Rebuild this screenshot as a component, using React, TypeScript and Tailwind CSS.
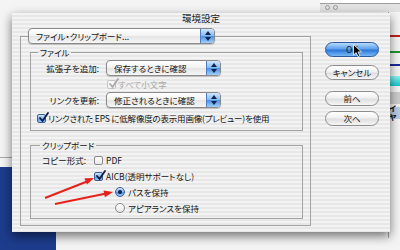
import React from "react";

const stripes =
  "bg-[repeating-linear-gradient(180deg,#f3f3f3_0px,#f3f3f3_2px,#e7e7e7_2px,#e7e7e7_4px)]";

const Stepper = () => (
  <div className="flex w-[14px] flex-col items-center justify-center gap-[2px] rounded-r-[3px] border-l border-[#4f7cc0] bg-[linear-gradient(180deg,#cfe6fd,#84bbf4_48%,#4a92e6_52%,#9fcefb)]">
    <svg width="6" height="4" viewBox="0 0 6 4">
      <path d="M0 4 L3 0 L6 4 Z" fill="#14234a" />
    </svg>
    <svg width="6" height="4" viewBox="0 0 6 4">
      <path d="M0 0 L6 0 L3 4 Z" fill="#14234a" />
    </svg>
  </div>
);

const Popup = ({ label, className }: { label: string; className: string }) => (
  <div
    className={
      "flex h-[16px] items-stretch rounded-[4px] border border-[#8a8a8a] bg-[linear-gradient(180deg,#ffffff,#f2f2f2_50%,#e4e4e4_52%,#f7f7f7)] shadow-[0_1px_1px_rgba(0,0,0,0.18)] " +
      className
    }
  >
    <div className="flex flex-1 items-center pl-[7px] leading-none">{label}</div>
    <Stepper />
  </div>
);

const Check = ({ checked, disabled }: { checked?: boolean; disabled?: boolean }) => (
  <span
    className={
      "relative inline-flex h-[9px] w-[9px] shrink-0 rounded-[2px] border " +
      (disabled
        ? "border-[#c4c4c4] bg-[#f7f7f7]"
        : checked
          ? "border-[#3f5f95] bg-[linear-gradient(180deg,#cfe5fc,#7fb5ee_50%,#4f91de_52%,#9ccbf9)]"
          : "border-[#8a8a8a] bg-[linear-gradient(180deg,#ffffff,#e9e9e9)]")
    }
  >
    {checked && (
      <svg className="absolute left-[1px] top-[-3px]" width="10" height="11" viewBox="0 0 10 11">
        <path
          d="M1 6 L3.5 9 L9 1"
          fill="none"
          stroke={disabled ? "#a9a9a9" : "#0f1d45"}
          strokeWidth="1.8"
          strokeLinecap="round"
          strokeLinejoin="round"
        />
      </svg>
    )}
  </span>
);

const Radio = ({ on }: { on?: boolean }) => (
  <span
    className={
      "inline-flex h-[10px] w-[10px] shrink-0 items-center justify-center rounded-full border " +
      (on
        ? "border-[#3f5f95] bg-[linear-gradient(180deg,#cfe5fc,#7fb5ee_50%,#4f91de_52%,#9ccbf9)]"
        : "border-[#8a8a8a] bg-[linear-gradient(180deg,#ffffff,#e6e6e6)]")
    }
  >
    {on && <span className="h-[4px] w-[4px] rounded-full bg-[#0f1d45]" />}
  </span>
);

const AquaButton = ({
  label,
  primary,
  className,
}: {
  label: string;
  primary?: boolean;
  className: string;
}) => (
  <div
    className={
      "flex h-[15px] w-[54px] items-center justify-center rounded-full border leading-none " +
      (primary
        ? "border-[#2d58a0] bg-[linear-gradient(180deg,#b9dafc,#5ea2ec_45%,#2b76d8_55%,#79b8f7)] text-[#0c1836] "
        : "border-[#8d8d8d] bg-[linear-gradient(180deg,#ffffff,#f0f0f0_48%,#dedede_52%,#f6f6f6)] ") +
      className
    }
  >
    {label}
  </div>
);

export default function App() {
  return (
    <div className="relative h-[250px] w-[400px] overflow-hidden bg-[#f4f4f4] font-['Noto_Sans_CJK_JP','Liberation_Sans',sans-serif] text-[8.5px] text-[#141414] [font-feature-settings:'palt']">
      {/* desktop windows behind */}
      <div className="absolute left-0 top-[157px] h-[1px] w-[14px] bg-[#a8a8a8]" />
      <div className="absolute left-0 top-[167px] h-[83px] w-[56px] bg-[#1d3c8c]" />
      <div className="absolute left-[320px] top-0 flex h-[12px] w-[80px] flex-col bg-[#e2e2e2]">
        <div className="h-[4px] border-b border-[#a0a0a0] bg-white" />
        <div className="flex gap-[3px] pl-[5px] pt-[1px]">
          <span className="h-[5px] w-[5px] rounded-full border border-[#9a9a9a]" />
          <span className="h-[5px] w-[5px] rounded-full border border-[#9a9a9a]" />
        </div>
      </div>
      <div className="absolute left-[388px] top-[12px] flex h-[226px] w-[12px] flex-col border-l border-[#9c9c9c] bg-[#f4f4f4]">
        <div className="mt-[23px] h-[2px] bg-[#c0201a]" />
        <div className="mt-[14px] h-[2px] bg-[#1e9a2c]" />
        <div className="mt-[11px] h-[2px] bg-[#1a2aa0]" />
        <div className="mt-[10px] h-[10px] bg-[linear-gradient(180deg,#8ff4f4,#12c8cc)]" />
        <div className="mt-[6px] h-[12px] bg-[#cdcdcd]" />
        <div className="mt-[3px] flex h-[12px] items-center bg-[#b9cbe6] text-[8px] font-bold leading-none">
          イヤ
        </div>
      </div>

      {/* dialog */}
      <div
        className={
          "absolute left-[12px] top-[13px] flex h-[219px] w-[378px] flex-col shadow-[0_4px_10px_rgba(0,0,0,0.55)] " +
          stripes
        }
      >
        <div className="flex h-[12px] items-center justify-center text-[9.5px] leading-none text-[#222]">
          環境設定
        </div>

        <div className="flex pl-[8px] pt-[3px]">
          <fieldset className="m-0 h-[198px] w-[291px] border border-[#a2a2a2] p-0">
            <legend className="ml-[7px] p-0">
              <Popup label="ファイル・クリップボード..." className="w-[187px]" />
            </legend>

            <div className="ml-[9px] mr-[7px] mt-[3px] flex flex-col">
              <fieldset className="m-0 h-[84px] border border-[#a2a2a2] p-0">
                <legend className="ml-[7px] px-[2px] leading-[11px]">ファイル</legend>

                <div className="mt-[2px] flex h-[16px] items-center">
                  <span className="ml-[6px] w-[62px] text-right leading-none">拡張子を追加:</span>
                  <Popup label="保存するときに確認" className="ml-[7px] w-[115px]" />
                </div>

                <div className="mt-[2px] flex h-[12px] items-center pl-[76px]">
                  <Check checked disabled />
                  <span className="ml-[2px] leading-none text-[#a8a8a8]">すべて小文字</span>
                </div>

                <div className="mt-[2px] flex h-[16px] items-center">
                  <span className="ml-[6px] w-[62px] text-right leading-none">リンクを更新:</span>
                  <Popup label="修正されるときに確認" className="ml-[7px] w-[115px]" />
                </div>

                <div className="mt-[3px] flex h-[14px] items-center pl-[6px]">
                  <Check checked />
                  <span className="ml-[2px] leading-none tracking-[-0.2px]">
                    リンクされた EPS に低解像度の表示用画像(プレビュー)を使用
                  </span>
                </div>
              </fieldset>

              <fieldset className="m-0 mt-[9px] h-[79px] border border-[#a2a2a2] p-0">
                <legend className="ml-[9px] px-[2px] leading-[11px]">クリップボード</legend>

                <div className="mt-[1px] flex h-[16px] items-center">
                  <span className="w-[55px] text-right leading-none">コピー形式:</span>
                  <span className="ml-[8px] flex items-center">
                    <Check />
                    <span className="ml-[3px] leading-none">PDF</span>
                  </span>
                </div>

                <div className="flex h-[16px] items-center pl-[63px]">
                  <Check checked />
                  <span className="ml-[3px] leading-none">AICB(透明サポートなし)</span>
                </div>

                <div className="flex h-[16px] items-center pl-[84px]">
                  <Radio on />
                  <span className="ml-[3px] leading-none">パスを保持</span>
                </div>

                <div className="flex h-[16px] items-center pl-[84px]">
                  <Radio />
                  <span className="ml-[3px] leading-none">アピアランスを保持</span>
                </div>
              </fieldset>
            </div>
          </fieldset>

          <div className="ml-[14px] flex flex-col">
            <AquaButton label="OK" primary className="mt-[14px]" />
            <AquaButton label="キャンセル" className="mt-[8px]" />
            <AquaButton label="前へ" className="mt-[11px]" />
            <AquaButton label="次へ" className="mt-[5px]" />
          </div>
        </div>
      </div>

      {/* annotations */}
      <svg className="pointer-events-none absolute left-0 top-0" width="400" height="250" viewBox="0 0 400 250">
        <line x1="45" y1="198" x2="87" y2="181.5" stroke="#e5221b" strokeWidth="2" />
        <path d="M94 178 L87 184.6 L84.4 178.2 Z" fill="#e5221b" />
        <line x1="55" y1="204" x2="105" y2="193.7" stroke="#e5221b" strokeWidth="2" />
        <path d="M113 192 L104.9 197.2 L103.5 190.4 Z" fill="#e5221b" />
      </svg>

      {/* mouse pointer */}
      <svg className="pointer-events-none absolute left-[353px] top-[44px]" width="10" height="14" viewBox="0 0 10 14">
        <path
          d="M0.5 0.5 L0.5 11 L3.2 8.6 L5 12.6 L6.8 11.8 L5 7.9 L8.5 7.9 Z"
          fill="#000"
          stroke="#fff"
          strokeWidth="0.8"
        />
      </svg>
    </div>
  );
}
